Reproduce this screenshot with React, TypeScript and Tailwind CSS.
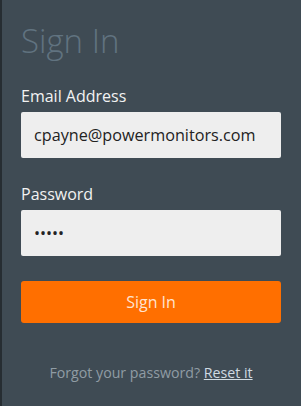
import React from "react";

export default function App() {
  return (
    <div
      className="w-[301px] h-[406px] bg-[#3f4b54] border-l-2 border-[#262d32] pl-[19px] pr-[20px] pt-[21px] flex flex-col"
      style={{ fontFamily: '"Open Sans", sans-serif' }}
    >
      <h1 className="text-[33px] leading-[40px] font-light text-[#617380]">Sign In</h1>
      <label className="mt-[23px] text-[16px] leading-[24px] text-[#f2f2f2]">Email Address</label>
      <input
        readOnly
        value="cpayne@powermonitors.com"
        className="mt-[4px] h-[46px] w-full rounded-[2px] bg-[#eeeeee] px-[13px] text-[16.2px] text-[#222222] outline-none"
        style={{ fontFamily: '"Open Sans", sans-serif' }}
      />
      <label className="mt-[24px] text-[16px] leading-[24px] text-[#f2f2f2]">Password</label>
      <input
        readOnly
        type="password"
        value="12345"
        className="mt-[4px] h-[46px] w-full rounded-[2px] bg-[#eeeeee] px-[13px] text-[16px] text-[#222222] outline-none"
        style={{ fontFamily: '"Open Sans", sans-serif' }}
      />
      <button className="mt-[25px] h-[42px] w-full rounded-[3px] bg-[#ff6f00] text-[16px] text-[#ffe3d0]">
        Sign In
      </button>
      <p className="mt-[40px] text-center text-[14.2px] leading-[20px] text-[#909ca4]">
        Forgot your password?{" "}
        <a className="text-[#cfdae2] underline" href="#">
          Reset it
        </a>
      </p>
    </div>
  );
}
